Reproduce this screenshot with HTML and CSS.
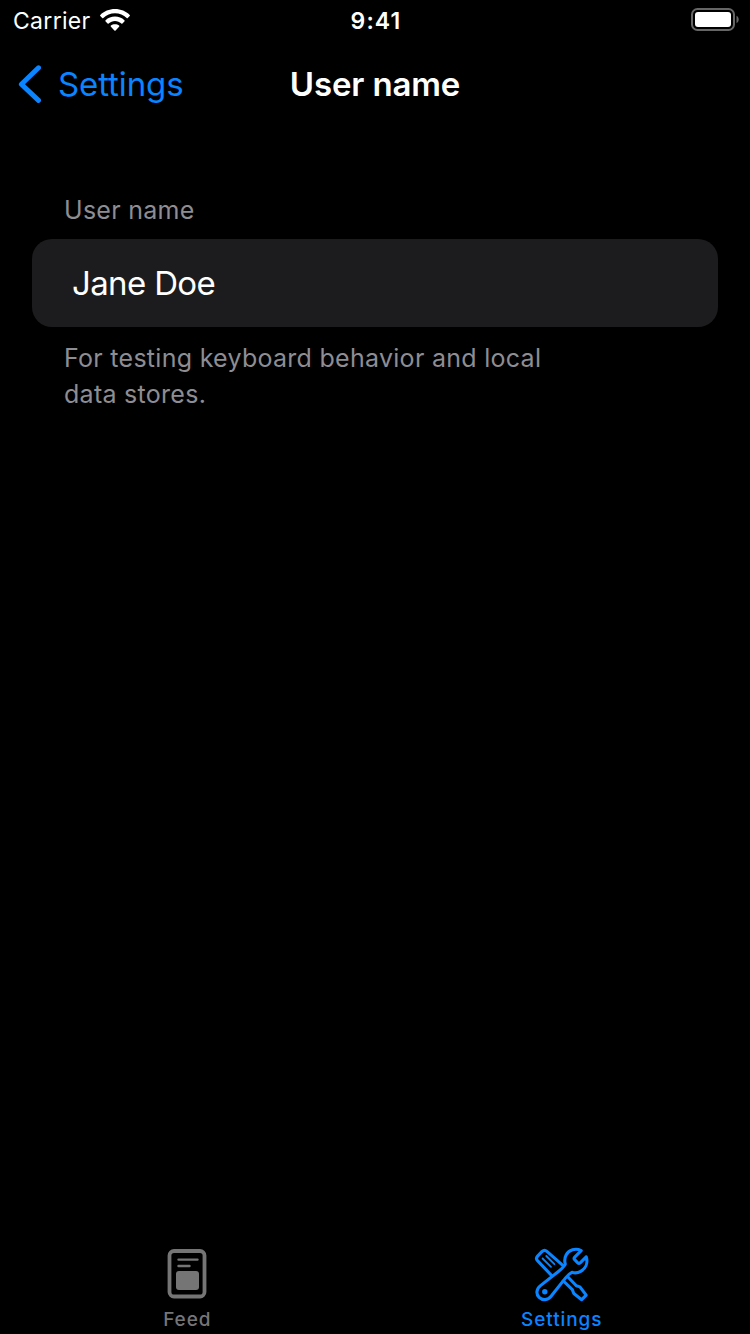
FILE: index.html
```html
<!DOCTYPE html>
<html lang="en">
<head>
<meta charset="utf-8">
<title>User name</title>
<link rel="stylesheet" href="styles.css">
</head>
<body>
<div class="screen">
  <header class="status">
    <div class="status-left">
      <span class="carrier">Carrier</span>
      <svg class="wifi" width="30" height="23" viewBox="0 0 30 23">
        <path d="M15 0C9.200 0 4 2.200.300 5.900c-.4.400-.4.800 0 1.200l1.900 1.900c.3.300.8.300 1.100 0C6.400 6 10.500 4.300 15 4.300S23.600 6 26.700 9c.3.300.8.300 1.100 0l1.900-1.900c.4-.4.400-.8 0-1.200C26 2.200 20.800 0 15 0z"/>
        <path d="M15 7.600c-3.600 0-6.900 1.400-9.400 3.600-.4.400-.4.800 0 1.200l2 2c.3.300.8.300 1.100 0C10.400 12.900 12.600 12 15 12s4.600.9 6.300 2.400c.3.300.8.300 1.100 0l2-2c.4-.4.400-.8 0-1.200C21.900 9 18.600 7.600 15 7.600z"/>
        <path d="M15 15.200c-1.600 0-3 .5-4.100 1.400-.4.400-.4.800 0 1.200l3.500 3.700c.4.400.8.400 1.200 0l3.500-3.700c.4-.4.400-.8 0-1.200-1.100-.9-2.500-1.400-4.100-1.400z"/>
      </svg>
    </div>
    <span class="clock">9:41</span>
    <div class="status-right">
      <svg class="battery" width="49" height="24" viewBox="0 0 49 24">
        <rect class="battery-shell" x="2" y="1" width="42" height="21" rx="5.500"/>
        <rect class="battery-charge" x="5" y="4" width="36" height="15" rx="3"/>
        <path class="battery-cap" d="M46.500 7.800c1.300.6 2.200 2 2.200 3.700s-.9 3.100-2.200 3.700z"/>
      </svg>
    </div>
  </header>
  <nav class="navbar">
    <a class="back">
      <svg class="chevron" width="24" height="40" viewBox="0 0 24 40"><path d="M21.500 3.800L4.400 20.200l17.100 16.200"/></svg>
      <span class="back-label">Settings</span>
    </a>
    <h1 class="title">User name</h1>
    <span></span>
  </nav>
  <main class="content">
    <h2 class="section-head">User name</h2>
    <div class="field"><span class="field-value">Jane Doe</span></div>
    <p class="section-foot">For testing keyboard behavior and local<br>data stores.</p>
  </main>
  <footer class="tabs">
    <a class="tab">
      <svg class="tab-icon" width="64" height="64" viewBox="0 0 64 64">
        <rect class="line frame" x="14.500" y="9" width="35" height="45.500" rx="4.500"/>
        <path class="rule" d="M23.500 17.600h19M23.500 24h11"/>
        <rect class="solid" x="21" y="29" width="23" height="19" rx="3"/>
      </svg>
      <span class="tab-label feed">Feed</span>
    </a>
    <a class="tab active">
      <svg class="tab-icon" width="64" height="64" viewBox="0 0 64 64">
        <path class="line" d="M23 35L7.700 18.900c-1.500-1.500-1.500-3.300-.1-4.800l4.500-4.700c1.500-1.400 3.300-1.400 4.800 0l17.600 15.400"/>
        <path class="rule thin" d="M12.600 16.500l8.400 8.300M16.300 14l8.100 8.200"/>
        <path class="line" d="M51.200 8.600C45.400 5.700 38.800 7.900 36 13.300c-1.600 3.100-1.500 6-.7 8.800-1.200 2.400-3.600 4.600-6.300 6.900L10.500 43.600c-4.500 3.600-4.500 8.800-1.400 11.800 3.400 3.300 8.800 3 12-1.100l14.500-18.400c2.100-2.700 4-4.600 6.300-5.600 2.900 1 6 .7 8.800-.9 5.200-3 7.400-8.700 5.500-14.600l-6 6.100c-1 .8-1.800.6-2.700-.3l-2.800-2.900c-.9-.9-.9-1.700 0-2.600z"/>
        <circle class="solid" cx="14.800" cy="49.800" r="2.700"/>
        <path class="line" d="M37.500 34.500l8.800 9.200 3.600 1.200 6.300 8.200-4.500 4.600-7.900-6.200-1.500-3.900-9.900-9.600"/>
      </svg>
      <span class="tab-label settings">Settings</span>
    </a>
  </footer>
</div>
</body>
</html>
```

FILE: styles.css
```css
* { box-sizing: border-box; margin: 0; padding: 0; }
body { background: #000; font-family: Inter, "Liberation Sans", sans-serif; font-weight: 400; }
.screen { width: 750px; height: 1334px; display: flex; flex-direction: column; background: #000; color: #fff; overflow: hidden; }
.status { height: 40px; display: grid; grid-template-columns: 1fr auto 1fr; padding: 0 11px 0 13px; align-items: center; }
.status-left { display: flex; align-items: center; gap: 9px; }
.carrier { font-size: 23px; line-height: 38px; padding-top: 2px; letter-spacing: .3px; width: 78px; white-space: nowrap; }
.wifi { fill: #fff; }
.clock { font-size: 23px; line-height: 38px; padding-top: 2px; font-weight: 600; letter-spacing: 1.1px; }
.status-right { display: flex; justify-content: flex-end; }
.battery-shell { fill: none; stroke: #666; stroke-width: 2; }
.battery-charge { fill: #fff; }
.battery-cap { fill: #666; }
.navbar { height: 88px; display: grid; grid-template-columns: 1fr auto 1fr; align-items: center; padding: 0 17px; }
.back { display: flex; align-items: center; gap: 17px; color: #0a84ff; }
.chevron path { fill: none; stroke: #0a84ff; stroke-width: 5; stroke-linecap: round; stroke-linejoin: round; }
.back-label { font-size: 33px; line-height: 40px; letter-spacing: -.1px; }
.title { font-size: 33px; line-height: 40px; font-weight: 600; letter-spacing: -.15px; }
.content { flex: 1; padding: 64px 32px 0; }
.section-head { font-size: 25px; font-weight: 400; line-height: 36px; padding-left: 32px; color: #8d8d93; letter-spacing: .28px; }
.field { height: 88px; margin: 11px 0 13px; border-radius: 20px; background: #1c1c1e; padding: 0 40px; display: flex; align-items: center; }
.field-value { font-size: 33px; line-height: 40px; letter-spacing: -.65px; }
.section-foot { font-size: 25px; line-height: 36px; padding-left: 32px; color: #8d8d93; letter-spacing: .28px; }
.tabs { height: 98px; display: flex; padding-right: 1px; }
.tab { flex: 1; display: flex; flex-direction: column; align-items: center; padding-top: 6px; color: #757575; }
.tab.active { color: #0a84ff; }
.tab-icon { flex: none; }
.line { fill: none; stroke: currentColor; stroke-width: 3.1; stroke-linejoin: round; }
.frame { stroke-width: 3.8; }
.rule { fill: none; stroke: currentColor; stroke-width: 2.4; stroke-linecap: round; }
.thin { stroke-width: 1.8; }
.solid { fill: currentColor; }
.tab-label { font-size: 19px; line-height: 28px; font-weight: 500; letter-spacing: .9px; }
```
